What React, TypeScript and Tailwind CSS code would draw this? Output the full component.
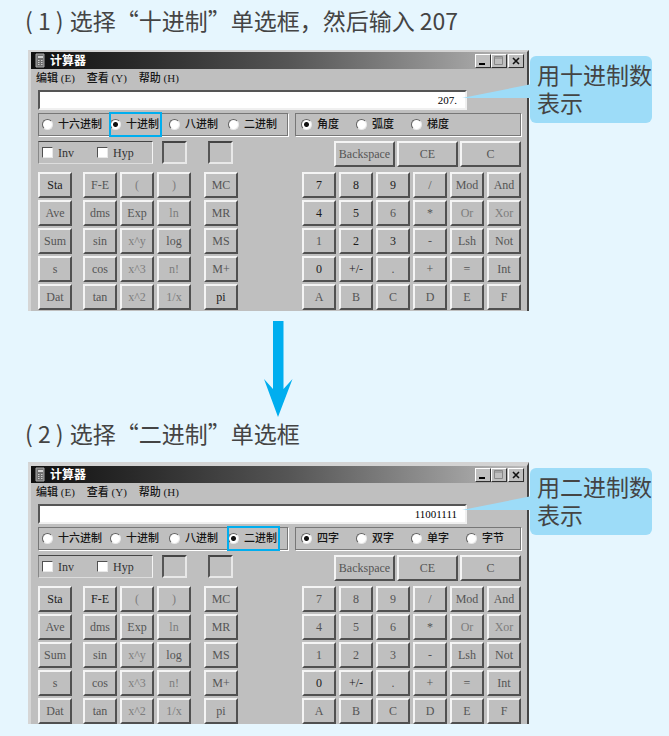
import React from "react";
import clsx from "clsx";

const LEFT_KEYS = [
  ["Sta", "F-E", "(", ")", "MC"],
  ["Ave", "dms", "Exp", "ln", "MR"],
  ["Sum", "sin", "x^y", "log", "MS"],
  ["s", "cos", "x^3", "n!", "M+"],
  ["Dat", "tan", "x^2", "1/x", "pi"],
];

const RIGHT_KEYS = [
  ["7", "8", "9", "/", "Mod", "And"],
  ["4", "5", "6", "*", "Or", "Xor"],
  ["1", "2", "3", "-", "Lsh", "Not"],
  ["0", "+/-", ".", "+", "=", "Int"],
  ["A", "B", "C", "D", "E", "F"],
];

const FAINT = ["(", ")", "ln", "x^y", "x^3", "x^2", "1/x", "n!", "Or", "Xor"];

const BASES = ["十六进制", "十进制", "八进制", "二进制"];

type CalcProps = {
  id: string;
  value: string;
  base: string;
  units: string[];
  strong: string[];
  thickTop?: boolean;
};

function Key({ label, tone, className }: { label: string; tone: string; className: string }) {
  return (
    <button
      type="button"
      className={clsx(
        "flex h-[26px] items-center justify-center border-2 border-t-[#f4f4f4] border-r-[#505050] border-b-[#505050] border-l-[#f4f4f4] bg-[#bfbfbf] text-xs leading-3",
        tone,
        className,
      )}
    >
      {label}
    </button>
  );
}

function Radio({ name, label, checked, className }: { name: string; label: string; checked: boolean; className: string }) {
  return (
    <label className={clsx("flex h-[25px] shrink-0 items-center gap-[5px] font-medium whitespace-nowrap", className)}>
      <input
        type="radio"
        name={name}
        defaultChecked={checked}
        className="size-[11px] shrink-0 appearance-none rounded-full border border-t-[#606060] border-r-[#e8e8e8] border-b-[#e8e8e8] border-l-[#606060] bg-white checked:bg-[radial-gradient(circle,#111_0_2px,#fff_3px)]"
      />
      {label}
    </label>
  );
}

function Check({ label }: { label: string }) {
  return (
    <label className="flex w-[58px] items-center gap-[5px] text-xs text-[#333]">
      <input
        type="checkbox"
        className="size-[11px] appearance-none border border-t-[#505050] border-r-[#e8e8e8] border-b-[#e8e8e8] border-l-[#505050] bg-white"
      />
      {label}
    </label>
  );
}

function TitleButton({ label, children }: { label: string; children: React.ReactNode }) {
  return (
    <button
      type="button"
      aria-label={label}
      className="h-[14px] w-4 border border-t-white border-r-[#303030] border-b-[#303030] border-l-white bg-[#bfbfbf]"
    >
      <svg viewBox="0 0 14 12" className="h-3 w-[14px]" fill="none">
        {children}
      </svg>
    </button>
  );
}

function Calculator({ id, value, base, units, strong, thickTop }: CalcProps) {
  const tone = (key: string) =>
    strong.includes(key) ? "text-[#1c1c1c]" : FAINT.includes(key) ? "text-[#7d7d7d]" : "text-[#555]";
  const group = "flex h-[23px] items-center border border-[#777] shadow-[1px_1px_0_#fff]";
  const well = "h-[23px] w-[25px] border-2 border-t-[#444] border-r-[#e8e8e8] border-b-[#e8e8e8] border-l-[#555]";

  return (
    <section
      aria-label="计算器"
      className={clsx(
        "min-w-0 flex-1 overflow-hidden border-r-2 border-l-[3px] border-r-[#444] border-l-[#d6d6d6] bg-[#bfbfbf] font-['Liberation_Serif','Noto_Sans_CJK_SC',serif] text-[11px] text-[#151515]",
        thickTop ? "h-[262px] border-t-4 border-t-[#d3d3d3]" : "h-[261px] border-t-2 border-t-[#d3d3d3]",
      )}
    >
      <header className="mr-0.5 flex h-[17px] items-center bg-linear-to-r from-[#101010] via-[#555] via-52% to-[#bababa] pr-px pl-1">
        <svg viewBox="0 0 10 15" className="h-[15px] w-[10px]">
          <path d="M1 1h8v13H1z" fill="#707070" stroke="#a8a8a8" />
          <path d="M3 3h5v2H3z" fill="#d0d0d0" />
          <path d="M3 7.5h1.500M6 7.500h1.500M3 9.500h1.500M6 9.500h1.500M3 11.500h1.500M6 11.500h1.500" stroke="#ccc" />
        </svg>
        <h2 className="ml-[5px] flex-1 text-xs leading-4 font-bold text-white">计算器</h2>
        <TitleButton label="最小化">
          <path d="M3 9h6" stroke="#000" strokeWidth="2" />
        </TitleButton>
        <TitleButton label="最大化">
          <path d="M2.500 1.500h8v8h-8zM2.500 3h8" stroke="#888" />
        </TitleButton>
        <span className="w-px" />
        <TitleButton label="关闭">
          <path d="M4 3l6 6M10 3l-6 6" stroke="#111" strokeWidth="1.600" />
        </TitleButton>
      </header>

      <nav className="flex h-[19px] items-center gap-3 pl-[5px] font-medium">
        <button type="button">编辑 (E)</button>
        <button type="button">查看 (Y)</button>
        <button type="button">帮助 (H)</button>
      </nav>

      <div className="pt-0.5 pr-1.5 pl-[7px]">
        <input
          readOnly
          aria-label="显示"
          value={value}
          className="block h-5 w-[calc(100%-54px)] border-2 border-t-[#555] border-r-[#f0f0f0] border-b-[#f0f0f0] border-l-[#555] bg-white pr-2 text-right text-black"
        />

        <div className="mt-[3px] flex gap-[7px]">
          <fieldset className={clsx(group, "w-[250px] shrink-0 gap-1.5 pl-[3px]")}>
            {BASES.map((item, i) => (
              <Radio
                key={item}
                name={id + "-base"}
                label={item}
                checked={item === base}
                className={clsx(
                  i === 0 ? "w-[61px]" : "w-[53px] pl-px",
                  item === base && "outline-2 -outline-offset-2 outline-[#00aeef]",
                )}
              />
            ))}
          </fieldset>
          <fieldset className={clsx(group, "min-w-0 flex-1 pl-[5px]")}>
            {units.map((item, i) => (
              <Radio key={item} name={id + "-unit"} label={item} checked={i === 0} className="w-[55px]" />
            ))}
          </fieldset>
        </div>

        <div className="mt-[5px] flex">
          <div className="flex h-[23px] w-[115px] items-center border border-t-[#444] border-r-[#f4f4f4] border-b-[#ddd] border-l-[#888] pl-[3px]">
            <Check label="Inv" />
            <Check label="Hyp" />
          </div>
          <div className={clsx(well, "ml-[9px]")} />
          <div className={clsx(well, "ml-[21px]")} />
          <div className="ml-auto flex gap-0.5">
            {["Backspace", "CE", "C"].map((k) => (
              <Key key={k} label={k} tone="text-[#555]" className="w-[61px]" />
            ))}
          </div>
        </div>

        <div className="mt-[5px] flex justify-between">
          <div className="flex flex-col gap-0.5">
            {LEFT_KEYS.map((row) => (
              <div key={row[0]} className="flex">
                {row.map((k, i) => (
                  <Key
                    key={k}
                    label={k}
                    tone={tone(k)}
                    className={clsx("w-[34px]", i === 1 && "ml-[11px]", (i === 2 || i === 3) && "ml-[3px]", i === 4 && "ml-[13px]")}
                  />
                ))}
              </div>
            ))}
          </div>
          <div className="flex flex-col gap-0.5">
            {RIGHT_KEYS.map((row) => (
              <div key={row[0]} className="flex gap-[3px]">
                {row.map((k) => (
                  <Key key={k} label={k} tone={tone(k)} className="w-[34px]" />
                ))}
              </div>
            ))}
          </div>
        </div>
      </div>
    </section>
  );
}

function Callout({ children }: { children: React.ReactNode }) {
  return (
    <aside className="relative mt-1.5 ml-px h-[67px] w-[122px] shrink-0 rounded-md bg-[#9ddcf8] pt-1 pl-[7px] text-[23px] leading-7">
      <svg viewBox="0 0 70 16" className="absolute top-7 -left-[68px] h-4 w-[70px]">
        <path d="M0 14L70 0V14Z" fill="#9ddcf8" />
      </svg>
      {children}
    </aside>
  );
}

function StepTitle({ step, className, children }: { step: string; className: string; children: React.ReactNode }) {
  return (
    <h1 className={clsx("flex gap-1.5 pl-[25px] text-[23px] leading-7 whitespace-nowrap", className)}>
      <span>( {step} )</span>
      <span>{children}</span>
    </h1>
  );
}

export default function App() {
  return (
    <main
      lang="zh-CN"
      className="min-h-screen bg-[#e6f6fe] pb-3 font-['Noto_Sans_CJK_SC',sans-serif] text-[#444]"
    >
      <StepTitle step="1" className="pt-1.5 pb-4">
        选择“十进制”单选框，然后输入 207
      </StepTitle>
      <div className="flex items-start pr-[17px] pl-7">
        <Calculator
          id="dec"
          value="207."
          base="十进制"
          units={["角度", "弧度", "梯度"]}
          strong={["Sta", "pi", "7", "8", "9", "4", "5", "2", "3", "0", "+/-"]}
        />
        <Callout>
          用十进制数
          <br />
          表示
        </Callout>
      </div>

      <svg viewBox="0 0 30 96" className="mt-[10px] ml-[263px] block h-24 w-[30px]">
        <path d="M10 0H20.500V68L29.500 58L15 96L1 58L10 68Z" fill="#00aeef" />
      </svg>

      <StepTitle step="2" className="pt-0.5 pb-[15px]">
        选择“二进制”单选框
      </StepTitle>
      <div className="flex items-start pr-[17px] pl-7">
        <Calculator
          id="bin"
          value="11001111"
          base="二进制"
          units={["四字", "双字", "单字", "字节"]}
          strong={["Sta", "F-E", "0", "+/-"]}
          thickTop
        />
        <Callout>
          用二进制数
          <br />
          表示
        </Callout>
      </div>
    </main>
  );
}
